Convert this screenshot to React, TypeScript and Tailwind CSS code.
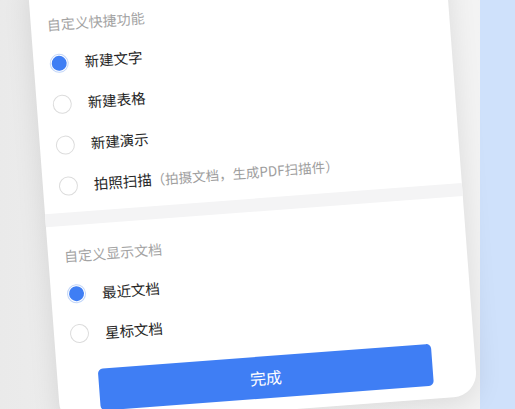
import React from "react";

type Item = { label: string; hint?: string; checked?: boolean };

const shortcuts: Item[] = [
  { label: "新建文字", checked: true },
  { label: "新建表格" },
  { label: "新建演示" },
  { label: "拍照扫描", hint: "（拍摄文档，生成PDF扫描件）" },
];

const docs: Item[] = [{ label: "最近文档", checked: true }, { label: "星标文档" }];

function Radio({ checked }: { checked?: boolean }) {
  if (checked) {
    return (
      <span className="flex h-[19px] w-[19px] shrink-0 items-center justify-center rounded-full border border-[#c3d6f8] bg-white">
        <span className="h-[15px] w-[15px] rounded-full bg-[#3f7ef4]" />
      </span>
    );
  }
  return <span className="h-[19px] w-[19px] shrink-0 rounded-full border border-[#dcdcdc] bg-white" />;
}

function Row({ item, h }: { item: Item; h: string }) {
  return (
    <div className={`flex items-center gap-4 ${h}`}>
      <Radio checked={item.checked} />
      <span className="text-[14.5px] leading-5 text-[#262626]">
        {item.label}
        {item.hint && <span className="text-[13.5px] text-[#9e9e9e]">{item.hint}</span>}
      </span>
    </div>
  );
}

export default function App() {
  return (
    <div className="flex h-[409px] w-[515px] overflow-hidden font-['Noto_Sans_CJK_SC','Noto_Sans',sans-serif]">
      <div className="flex w-[480px] shrink-0 flex-col items-start bg-gradient-to-r from-[#eaeaea] via-[#f4f4f4] to-[#f3f3f3]">
        <div className="ml-[27px] mt-[-25px] h-[453px] w-[418px] shrink-0 origin-top-left -rotate-[4.3deg] rounded-[24px] bg-white px-4 pt-[41px] pb-[10px] shadow-[0_6px_28px_rgba(0,0,0,0.10)]">
          <div className="h-5 text-[14px] leading-5 text-[#a3a3a3]">自定义快捷功能</div>
          <div className="mt-[8.5px]">
            {shortcuts.map((it) => (
              <Row key={it.label} item={it} h="h-[41px]" />
            ))}
          </div>
          <div className="-mx-4 mt-[6px] h-[13px] bg-[#f4f4f5]" />
          <div className="mt-[20px] h-5 text-[14px] leading-5 text-[#a3a3a3]">自定义显示文档</div>
          <div className="mt-[9px]">
            {docs.map((it) => (
              <Row key={it.label} item={it} h="h-[40px]" />
            ))}
          </div>
          <button className="ml-[25px] mt-[16px] flex h-[42px] w-[334px] items-center justify-center rounded-[5px] bg-[#3f7ef4] text-[16px] text-white">
            完成
          </button>
        </div>
      </div>
      <div className="flex-1 bg-[#cfe1fb]" />
    </div>
  );
}
